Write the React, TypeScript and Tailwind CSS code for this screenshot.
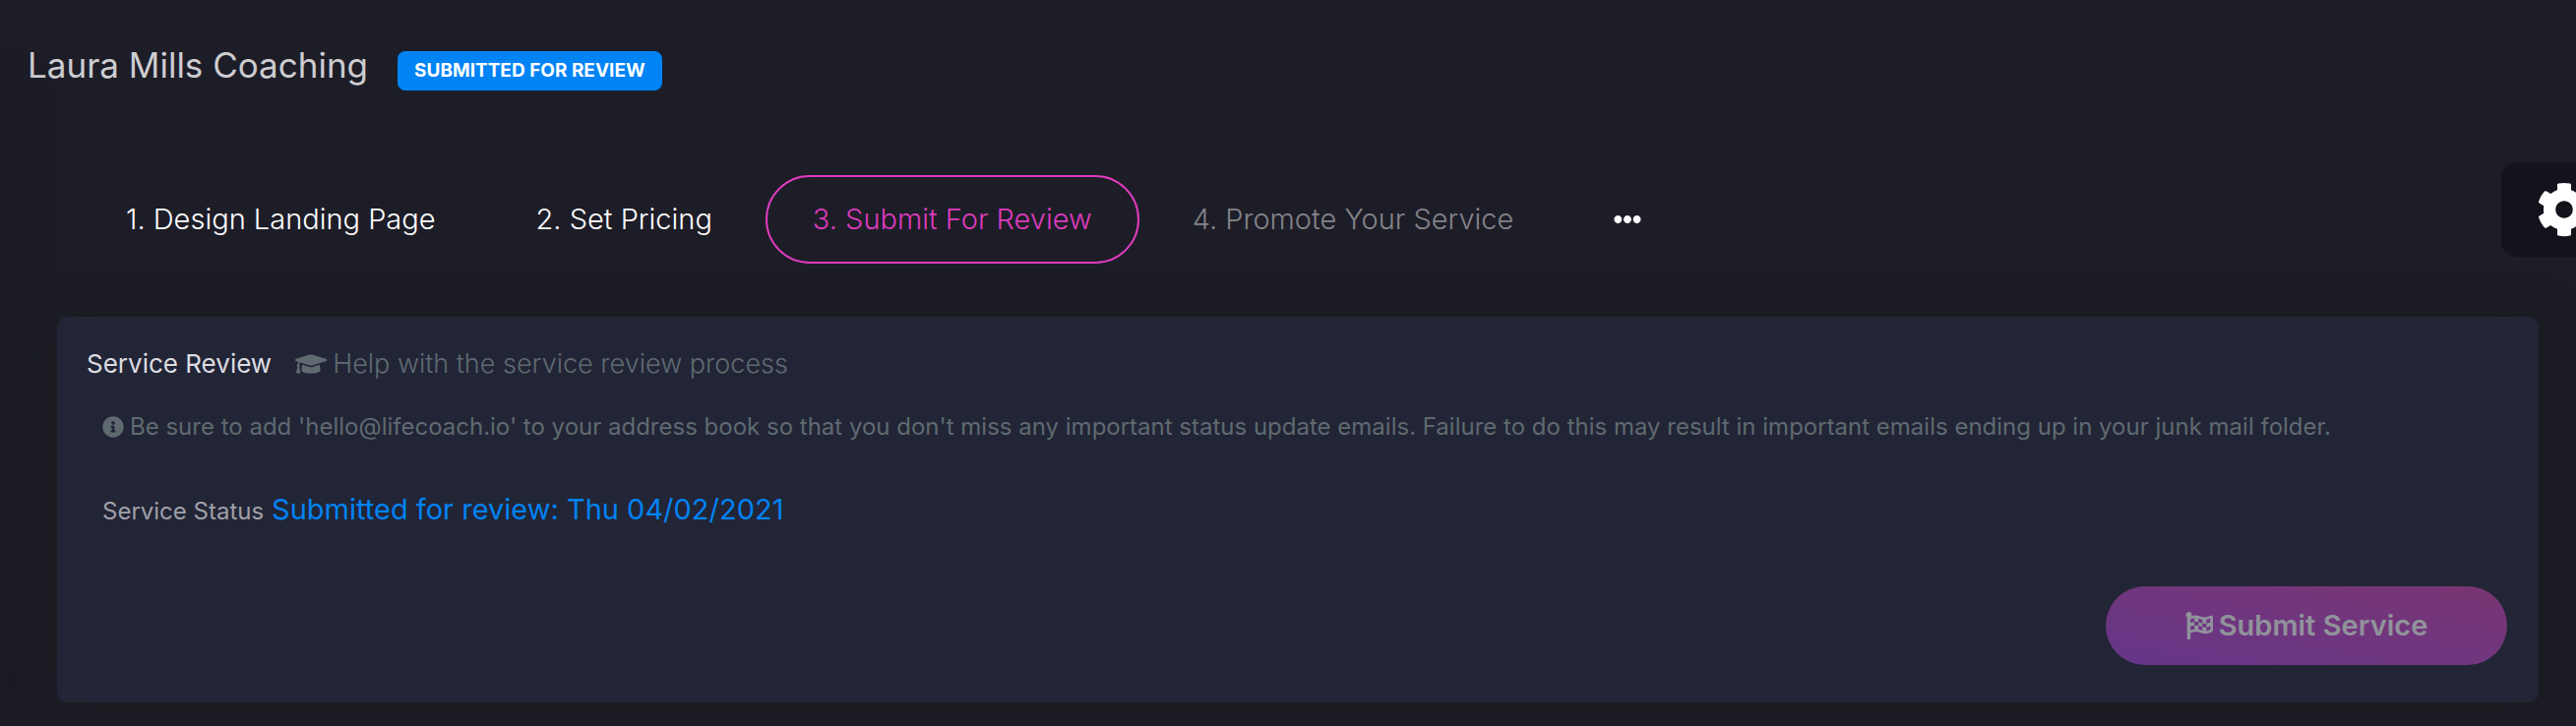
import { clsx } from 'clsx'
import { FaCog, FaEllipsisH, FaFlagCheckered, FaGraduationCap, FaInfoCircle } from 'react-icons/fa'

type Step = {
  label: string
  state: 'done' | 'active' | 'locked'
}

const steps: Step[] = [
  { label: '1. Design Landing Page', state: 'done' },
  { label: '2. Set Pricing', state: 'done' },
  { label: '3. Submit For Review', state: 'active' },
  { label: '4. Promote Your Service', state: 'locked' },
]

function StepTabs() {
  return (
    <nav className="flex flex-wrap items-center gap-[6px] pl-[22px]">
      {steps.map((step) => (
        <button
          key={step.label}
          type="button"
          disabled={step.state === 'locked'}
          className={clsx(
            'h-[90px] rounded-full border-2 px-[46px] text-[29px] font-light whitespace-nowrap',
            step.state === 'done' && 'border-transparent text-white',
            step.state === 'active' && 'border-[#dd3bbd] text-[#dd3bbd]',
            step.state === 'locked' && 'border-transparent text-[#838389]',
          )}
        >
          {step.label}
        </button>
      ))}
      <button type="button" aria-label="More steps" className="h-[90px] px-12 text-white">
        <FaEllipsisH className="size-7" />
      </button>
    </nav>
  )
}

function ReviewCard() {
  return (
    <section className="rounded-[10px] bg-[#222536] pt-7 pr-8 pb-[38px] pl-[30px] shadow-[0_0_40px_rgba(26,28,26,0.9)]">
      <div className="flex items-center gap-6">
        <h2 className="text-[26px] leading-10 text-[#dcdce0]">Service Review</h2>
        <a href="#help" className="flex items-center gap-[6px] text-[27px] leading-10 font-light text-[#5f6a70]">
          <FaGraduationCap className="size-8" />
          Help with the service review process
        </a>
      </div>

      <div className="px-4">
        <p className="mt-[26px] flex items-center gap-[6px] text-[24px] leading-9 text-[#5f6a70]">
          <FaInfoCircle className="size-[22px] shrink-0" />
          Be sure to add 'hello@lifecoach.io' to your address book so that you don't miss any important status update
          emails. Failure to do this may result in important emails ending up in your junk mail folder.
        </p>
        <p className="mt-[46px] flex items-baseline gap-2 leading-10">
          <span className="text-[24px] text-[#a0a0a8]">Service Status</span>
          <span className="text-[29px] text-[#0083f5]">Submitted for review: Thu 04/02/2021</span>
        </p>
      </div>

      <div className="mt-14 flex justify-end">
        <button
          type="button"
          disabled
          className="flex h-20 w-[408px] items-center justify-center gap-[6px] rounded-full bg-linear-to-tr from-[#aa46dc] to-[#d044ae] text-[29px] font-semibold text-white opacity-50"
        >
          <FaFlagCheckered className="size-7" />
          Submit Service
        </button>
      </div>
    </section>
  )
}

export default function App() {
  return (
    <div className="relative min-h-screen overflow-hidden bg-[#1d1d28] pb-6 font-[Inter,sans-serif]">
      {/* Shadow cast by the sidebar */}
      <div className="absolute top-24 bottom-0 -left-4 w-4 shadow-[0_0_50px_rgba(20,22,20,0.9)]" />

      <header className="flex items-center gap-[30px] pt-10 pl-7">
        <h1 className="text-[35px] leading-[52px] text-[#cdcdd0]">Laura Mills Coaching</h1>
        <span className="mt-3 rounded-lg bg-[#0083f5] px-[17px] text-[19px] leading-10 font-bold text-white uppercase">
          Submitted for review
        </span>
      </header>

      <main className="relative mt-[86px] pr-[38px] pl-[58px]">
        <StepTabs />
        <div className="mt-[54px]">
          <ReviewCard />
        </div>
      </main>

      {/* Settings drawer handle, runs off the right edge */}
      <button
        type="button"
        aria-label="Settings"
        className="absolute top-[165px] -right-[52px] flex h-24 w-32 items-center justify-center rounded-2xl bg-[#13131b] text-white"
      >
        <FaCog className="size-14" />
      </button>
    </div>
  )
}
